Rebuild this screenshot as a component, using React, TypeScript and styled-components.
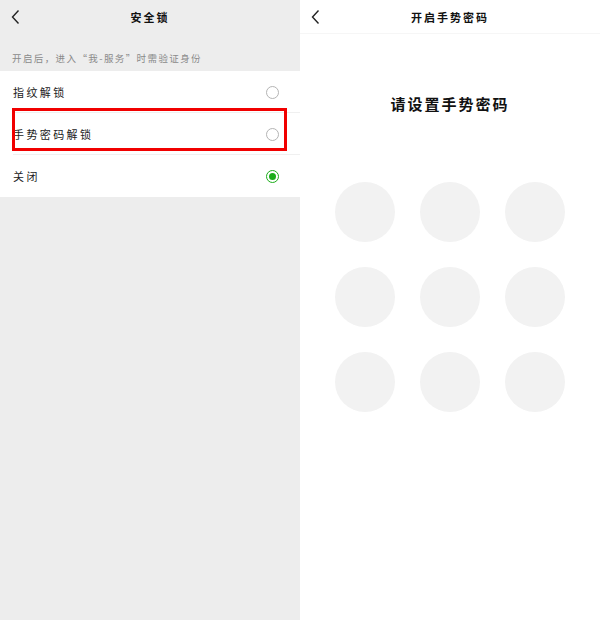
import styled, { createGlobalStyle } from "styled-components";

const GlobalStyle = createGlobalStyle`
    html, body {
        margin: 0;
        padding: 0;
        background: #ffffff;
    }
    body {
        font-family: "Noto Sans CJK SC", "Noto Sans", sans-serif;
    }
`;

const Screen = styled.div`
    display: flex;
    width: 600px;
    height: 620px;
    overflow: hidden;
`;

const Panel = styled.div<{ bg: string }>`
    display: flex;
    flex-direction: column;
    width: 300px;
    height: 620px;
    background: ${(props) => props.bg};
`;

const NavBar = styled.div<{ border?: boolean }>`
    position: relative;
    display: flex;
    align-items: center;
    justify-content: center;
    height: 33px;
    border-bottom: 1px solid ${(props) => (props.border ? "#f6f6f6" : "transparent")};
`;

const BackButton = styled.div`
    position: absolute;
    left: 11px;
    top: 9px;
    width: 9px;
    height: 16px;
    display: flex;
`;

const NavTitle = styled.div`
    font-size: 11px;
    font-weight: 700;
    letter-spacing: 2px;
    color: #111;
`;

const Note = styled.div`
    height: 37px;
    box-sizing: border-box;
    padding: 0 12px 6px;
    display: flex;
    align-items: flex-end;
    font-size: 9.5px;
    letter-spacing: 1.4px;
    color: #8a8a8a;
`;

const List = styled.div`
    background: #fff;
    display: flex;
    flex-direction: column;
`;

const Row = styled.div<{ last?: boolean }>`
    position: relative;
    height: 42px;
    display: flex;
    align-items: center;
    justify-content: space-between;
    padding: 0 21px 0 13px;
    &::after {
        content: "";
        display: ${(props) => (props.last ? "none" : "block")};
        position: absolute;
        left: 13px;
        right: 0;
        bottom: 0;
        height: 1px;
        background: #f0f0f0;
    }
`;

const RowLabel = styled.div`
    font-size: 11px;
    letter-spacing: 2.4px;
    color: #222;
`;

const Radio = styled.div<{ checked?: boolean }>`
    width: 11px;
    height: 11px;
    border-radius: 50%;
    border: 1px solid ${(props) => (props.checked ? "#1aad19" : "#b4b4b4")};
    display: flex;
    align-items: center;
    justify-content: center;
    &::before {
        content: "";
        display: ${(props) => (props.checked ? "block" : "none")};
        width: 7px;
        height: 7px;
        border-radius: 50%;
        background: #1aad19;
    }
`;

const Highlight = styled.div`
    position: absolute;
    left: 12px;
    top: -5px;
    width: 269px;
    height: 37px;
    border: 3px solid #f10000;
    pointer-events: none;
`;

const Heading = styled.div`
    margin-top: 59px;
    text-align: center;
    font-size: 15px;
    font-weight: 700;
    letter-spacing: 2px;
    color: #111;
`;

const DotGrid = styled.div`
    display: grid;
    grid-template-columns: repeat(3, 60px);
    grid-auto-rows: 60px;
    gap: 25px;
    margin: 68px 0 0 35px;
`;

const Dot = styled.div`
    border-radius: 50%;
    background: #f2f2f2;
`;

const Chevron = () => (
    <BackButton>
        <svg width="9" height="16" viewBox="0 0 9 16">
            <path d="M7.5 1.5 L1.5 8 L7.5 14.5" fill="none" stroke="#222" strokeWidth="1.4" />
        </svg>
    </BackButton>
);

const options = [
    { label: "指纹解锁", checked: false },
    { label: "手势密码解锁", checked: false, marked: true },
    { label: "关闭", checked: true },
];

export default function App() {
    return (
        <>
            <GlobalStyle />
            <Screen>
                <Panel bg="#ededed">
                    <NavBar>
                        <Chevron />
                        <NavTitle>安全锁</NavTitle>
                    </NavBar>
                    <Note>开启后，进入“我-服务”时需验证身份</Note>
                    <List>
                        {options.map((opt, ix) => (
                            <Row key={ix} last={ix === options.length - 1}>
                                <RowLabel>{opt.label}</RowLabel>
                                <Radio checked={opt.checked} />
                                {opt.marked && <Highlight />}
                            </Row>
                        ))}
                    </List>
                </Panel>
                <Panel bg="#ffffff">
                    <NavBar border>
                        <Chevron />
                        <NavTitle>开启手势密码</NavTitle>
                    </NavBar>
                    <Heading>请设置手势密码</Heading>
                    <DotGrid>
                        {Array.from({ length: 9 }).map((_, ix) => (
                            <Dot key={ix} />
                        ))}
                    </DotGrid>
                </Panel>
            </Screen>
        </>
    );
}
